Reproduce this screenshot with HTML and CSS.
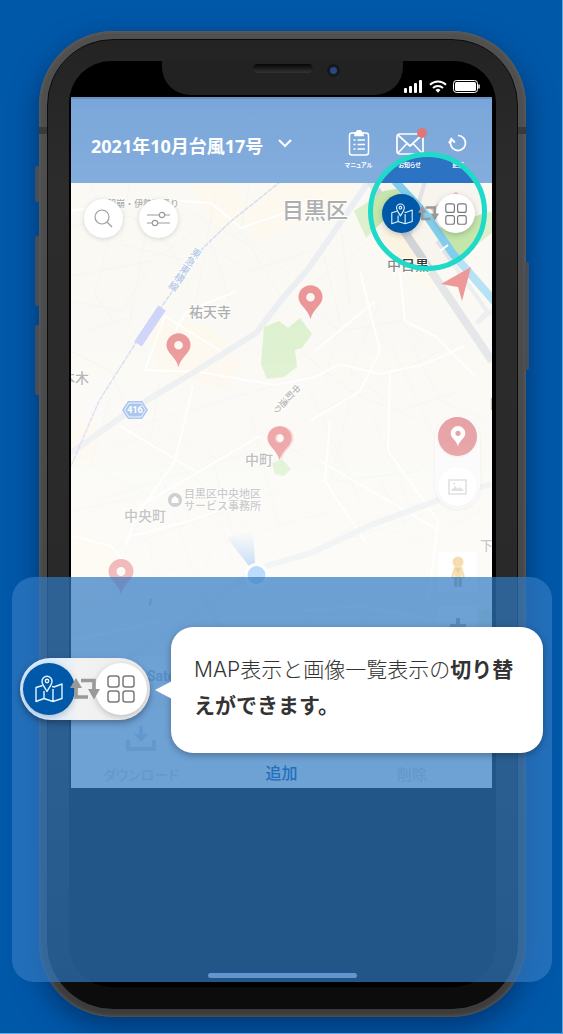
FILE: index.html
```html
<!DOCTYPE html>
<html lang="ja">
<head>
<meta charset="utf-8">
<meta name="viewport" content="width=device-width, initial-scale=1">
<title>MAP表示と画像一覧表示の切り替え</title>
<link rel="stylesheet" href="styles.css">
</head>
<body>
<svg class="defs" aria-hidden="true">
  <symbol id="i-map" viewBox="0 0 28 28">
    <g fill="none" stroke="currentColor" stroke-width="1.4" stroke-linejoin="round">
      <path d="M7.500 10.500 1 12.500v14l8-3 9 3 9-3V9l-8 3-2-.6M9 16v7.500M18 14v12.500"/>
      <path d="M12 16.500C9.500 12 7 9.500 7 6.200a5 5 0 0 1 10 0c0 3.300-2.500 5.800-5 10.300Z"/>
      <circle cx="12" cy="6" r="1.700"/>
    </g>
  </symbol>
  <symbol id="i-grid" viewBox="0 0 28 28">
    <g fill="none" stroke="currentColor" stroke-width="1.500">
      <rect x="1" y="1" width="11" height="11" rx="2.500"/><rect x="16" y="1" width="11" height="11" rx="2.500"/>
      <rect x="1" y="16" width="11" height="11" rx="2.500"/><rect x="16" y="16" width="11" height="11" rx="2.500"/>
    </g>
  </symbol>
  <symbol id="i-swap" viewBox="0 0 30 24">
    <g fill="none" stroke="currentColor" stroke-width="3.600">
      <path d="M6 9v11h12M11 3.500h13V14"/>
    </g>
    <path fill="currentColor" d="M0 11 6 1l6 10ZM18 12h12l-6 10.500Z"/>
  </symbol>
  <symbol id="i-pin" viewBox="0 0 26 36">
    <path fill="currentColor" fill-rule="evenodd" d="M13 0a12.500 12.500 0 0 1 12.500 12.500C25.500 21 15.500 24 13 35.500 10.500 24 .5 21 .5 12.500A12.500 12.500 0 0 1 13 0Zm0 8a4.500 4.500 0 1 0 0 9 4.500 4.500 0 0 0 0-9Z"/>
  </symbol>
</svg>

<main class="stage">
  <div class="phone">
    <span class="key key-mute"></span><span class="key key-up"></span><span class="key key-down"></span><span class="key key-power"></span>
    <span class="seam"></span>
    <div class="bezel">
      <div class="screen">
        <div class="status">
          <div class="notch"><span class="speaker"></span><span class="camera"></span></div>
          <svg width="19" height="13" viewBox="0 0 19 13" fill="#fff"><rect y="8" width="3" height="5" rx="1"/><rect x="5" y="6" width="3" height="7" rx="1"/><rect x="10" y="3" width="3" height="10" rx="1"/><rect x="15" width="3" height="13" rx="1"/></svg>
          <svg width="18" height="13" viewBox="0 0 18 13" fill="none" stroke="#fff" stroke-width="2"><path d="M1 4.800a11.500 11.500 0 0 1 16 0M4 8a7.200 7.200 0 0 1 10 0"/><path d="M6.500 10a3.600 3.600 0 0 1 5 0L9 12.800Z" fill="#fff" stroke="none"/></svg>
          <svg width="27" height="13" viewBox="0 0 27 13"><rect x=".5" y=".5" width="24" height="12" rx="3" fill="none" stroke="#fff"/><rect x="2" y="2" width="21" height="9" rx="1.500" fill="#fff"/><path d="M26 4.500v4" stroke="#fff" stroke-width="1.500"/></svg>
        </div>

        <div class="app">
          <header class="bar">
            <button class="title" type="button">2021年10月台風17号
              <svg width="14" height="9" viewBox="0 0 14 9" fill="none" stroke="#fff" stroke-width="2"><path d="m1 1 6 6 6-6"/></svg>
            </button>
            <nav class="tools">
              <button type="button">
                <svg width="22" height="26" viewBox="0 0 22 26" fill="none" stroke="#fff" stroke-width="1.500"><rect x="1.500" y="3" width="19" height="22" rx="2.500"/><path d="M7 3h1.500a2.500 2.500 0 0 1 5 0H15v2.500H7Z" fill="#fff"/><path d="M9.500 10H17M9.500 14.500H17M9.500 19H17M5.500 10h2M5.500 14.500h2M5.500 19h2"/></svg>
                <span>マニュアル</span>
              </button>
              <button type="button">
                <svg width="28" height="26" viewBox="0 0 28 26" fill="none" stroke="#fff" stroke-width="1.700"><rect x="1" y="4" width="26" height="20" rx="2.500"/><path d="m2 5 12 11L26 5M2 23l9-9.500M26 23l-9-9.500"/></svg>
                <i class="badge"></i>
                <span>お知らせ</span>
              </button>
              <button type="button">
                <svg width="20" height="26" viewBox="0 0 20 26" fill="none" stroke="#fff" stroke-width="1.700"><path d="M10 5.500a7.500 7.500 0 1 1-6.800 4.300"/><path d="m6.800 12.500-3.400-3.500-2.400 4.200" stroke-width="2"/></svg>
                <span>更新</span>
              </button>
            </nav>
          </header>

          <section class="map" aria-label="地図">
            <svg class="canvas" viewBox="71 182 421 525" preserveAspectRatio="xMidYMin slice">
              <path class="area" d="M270 180h90l-30 29-70 30-20-18ZM148 315l60 10 35 35-15 30-70-20ZM190 180l30 58 30-30-20-25ZM380 235l50 60 10-20-40-60ZM71 530l40 10v60H71ZM71 430l25-15v45H71Z"/>
              <path class="lane" d="M71 225l60-10 40 30 20 45M90 180l20 53-15 60 20 30M71 275l80-15 60-40M130 180l-10 63 80 20M71 300l50 10 30-45M85 330l40-12 20 25M71 460l90-30 60 30 80-10M110 395l-20 70 60 30-30 70M160 380l-10 60 60 50 30 90M71 510l100-20 90 40 70-20M300 300l40 30 60-10 40 40M320 240l20 80-15 60M380 300l-30 70 50 40 60-20M350 400l-20 80 30 60M300 560l60-40 60 20 60-30M380 480l40 70M250 180l-10 53 50 40M200 240l50 30 60-20M230 300l-20-60M410 340l30 60 50 20M280 440l60 40 80-10M100 580l90-15 50 40 70 10M71 620l110-10 70 35M150 540l10 100M300 600l30 100M360 580l20 110M280 650l100-20 110 10M440 570l-30 100M180 500l30 50-20 70M71 350l40 20 20 50M190 210l60 35 30 50M340 215l10 90M300 350l50 40 70 30M230 400l70 70M150 210l-20 110M215 195l-20 110"/>
              <path class="lane" d="M120 430l170-50M95 500l160-50M110 550l170-60M250 570l200-65M290 300l80-60M320 410l140-70M360 500l-50-110M420 530l-50-120M450 470l-60-130M200 590l-40-120M240 560l-30-110M280 530l-30-120"/>
              <path class="street" d="M71 210l80-12 60 4 30 25 80-28M165 315l-20 54 55 2 75 13 40-8 25-13 40 10 45-10 40-18M165 315l60 38M193 385l-18 75-35 50M120 425l75 45M260 435l-120 70-15 40 5-10 60-15 70-25M175 330l12-20 50-20M400 270l5 50 30 15 40 40M360 270l20 80-20 40-50 30M330 420l-5 60 40 60M71 535l40 10 20 25M320 460l120 70M375 300l-60 50M390 370l-2 80 50 70-10 80M71 640l90-20M300 610l60-5 80 15"/>
              <path class="road" d="m71 452 60-43 65-39 60-38 27-35 26-30 60-87"/>
              <path class="road" d="m71 695 140-93 45-34 55-16 60-28 70-26 50-15M203 590l16 33 16 17"/>
              <path class="road narrow" d="m425 180-15 53M437 240l50 70-10 12 15-12"/>
              <path class="road wide" d="m366 174 126 186"/>
              <path class="park" d="m264 326 15-6 9 7 12-10 12 16-10 14-7 2 2 17-13 10-17 2-6-15ZM272 462l10-4 9 10-7 7-9-2ZM354 210l30-20 18-3 8 20-24 10-20 20ZM435 228l57-18v22l-31 24ZM478 612l8-4 6 2v22h-14Z"/>
              <path class="plaza" d="m432 208 24-16 14 12-8 24-20-6Z"/>
              <path class="river" d="m395 180 32 35 26 38 42 48"/>
              <path class="bridge" d="m440 250 8-6"/>
              <path class="rail" d="m71 465 28-65 38-60 30-42 35-50 28-27 50-40"/>
              <path class="station" d="m138 343 24-36"/>
              <g class="label">
                <text x="107" y="206" font-size="9">朋崩・伊勢脇通り</text>
                <text x="282" y="217" font-size="22">目黒区</text>
                <text x="189" y="316" font-size="14">祐天寺</text>
                <text x="61" y="382" font-size="14">本木</text>
                <text x="245" y="464" font-size="14">中町</text>
                <text x="124" y="520" font-size="14">中央町</text>
                <text class="dark" x="387" y="269" font-size="14">中目黒</text>
                <text x="480" y="549" font-size="13">下</text>
                <text x="489" y="407" font-size="13">目</text>
                <text class="soft" x="184" y="497" font-size="11">目黒区中央地区</text>
                <text class="soft" x="184" y="509" font-size="11">サービス事務所</text>
                <text class="line" transform="translate(199 248) rotate(34)" font-size="10">東急東横線</text>
                <text class="down" transform="translate(299 385) rotate(43)" font-size="9">中町通り</text>
              </g>
              <circle cx="175" cy="499" r="7" fill="#8e9194"/><path d="M171.500 502v-4l3.500-3 3.500 3v4Z" fill="#fff"/>
              <path d="m122 409 6-9h14l6 9-6 9h-14Z" fill="#5a8fdc"/><path d="m124.500 409 4.500-7h12l4.500 7-4.500 7h-12Z" fill="none" stroke="#dfeaff"/>
              <text x="135" y="412" class="route">416</text>
              <path d="m441 283 30-17-9 34-4-14Z" fill="#e05050"/>
              <path d="m256 574-29-37q12-5 26-7Z" fill="url(#beam)"/>
              <linearGradient id="beam" x1="0" y1="0" x2="0" y2="1"><stop offset="0" stop-color="#6fb0f0" stop-opacity="0"/><stop offset="1" stop-color="#3c8ee8"/></linearGradient>
              <circle cx="256.500" cy="574" r="12" fill="#fff"/><circle cx="256.500" cy="574" r="9" fill="#4da2f5"/>
              <path d="m151 598-1 6" stroke="#2f87c8" stroke-width="2"/>
              <g color="#dd4a4c">
                <use href="#i-pin" x="298" y="284" width="25" height="35"/>
                <use href="#i-pin" x="166" y="332" width="25" height="35"/>
                <use href="#i-pin" x="269" y="425" width="25" height="35" opacity=".4"/>
                <use href="#i-pin" x="267" y="425" width="25" height="35"/>
                <use href="#i-pin" x="108" y="558" width="26" height="36"/>
              </g>
            </svg>
            <div class="map-top">
              <button class="round" type="button" aria-label="検索"><svg width="19" height="19" viewBox="0 0 19 19" fill="none" stroke="#555" stroke-width="1.200"><circle cx="8" cy="8" r="7"/><path d="m13 13 5 5"/></svg></button>
              <button class="round" type="button" aria-label="絞り込み"><svg width="23" height="16" viewBox="0 0 23 16" fill="none" stroke="#555" stroke-width="1.200"><path d="M0 4h12M18 4h5M0 12h5M11 12h12"/><circle cx="15" cy="4" r="2.700"/><circle cx="8" cy="12" r="2.700"/></svg></button>
              <div class="switch">
                <button class="on" type="button" aria-label="MAP表示"><svg><use href="#i-map"/></svg></button>
                <svg class="swap"><use href="#i-swap"/></svg>
                <button type="button" aria-label="画像一覧表示"><svg><use href="#i-grid"/></svg></button>
              </div>
            </div>
            <div class="side">
              <div class="stack">
                <button class="round red" type="button" aria-label="ピン"><svg width="16" height="21"><use href="#i-pin"/></svg></button>
                <button class="round" type="button" aria-label="画像"><svg width="19" height="16" viewBox="0 0 19 16" fill="none" stroke="#bbb" stroke-width="1.600"><path d="M1 1h17v14H1Z"/><path d="m3 12 4-5 3 3 2-2 4 4Z" fill="#bbb" stroke="none"/><circle cx="6" cy="4.500" r="1" fill="#bbb" stroke="none"/></svg></button>
              </div>
              <button class="square" type="button" aria-label="ストリートビュー"><svg width="18" height="32" viewBox="0 0 18 32"><path d="M5 11h8l3 10-2 2-2-5v3H6v-3l-2 5-2-2Z" fill="#e8a830"/><circle cx="9" cy="6" r="5.500" fill="#e8a830"/><path d="m6 12 3 5 3-5Z" fill="#cf7d1c"/><path d="M5 21h3.500v10H5ZM9.500 21H13v10H9.500Z" fill="#56732a"/></svg></button>
              <button class="square" type="button" aria-label="拡大"><svg width="16" height="16" stroke="#111" stroke-width="4"><path d="M8 0v16M0 8h16"/></svg></button>
            </div>
            <div class="types"><span></span><span>Satellite</span></div>
          </section>

          <nav class="tabs">
            <button type="button"><svg width="30" height="25" viewBox="0 0 30 25" fill="none" stroke="currentColor" stroke-width="4"><path d="M2 14v9h26v-9M15 0v10"/><path d="M8 8h14l-7 8Z" fill="currentColor" stroke="none"/></svg>ダウンロード</button>
            <button class="active" type="button"><svg width="26" height="25" viewBox="0 0 26 25" fill="none" stroke="currentColor" stroke-width="3"><path d="M13 2v17M4 11h18M3 23h20"/></svg>追加</button>
            <button type="button"><svg width="24" height="25" viewBox="0 0 24 25" fill="none" stroke="currentColor" stroke-width="3"><path d="M2 6h20M5 6v17h14V6M9 2h6"/></svg>削除</button>
          </nav>
          <div class="veil"></div>
          <div class="ring"></div>
        </div>
        <span class="home"></span>
      </div>
    </div>
  </div>

  <section class="guide">
    <div class="switch large">
      <button class="on" type="button" aria-label="MAP表示"><svg><use href="#i-map"/></svg></button>
      <svg class="swap"><use href="#i-swap"/></svg>
      <button type="button" aria-label="画像一覧表示"><svg><use href="#i-grid"/></svg></button>
    </div>
    <p class="bubble">MAP表示と画像一覧表示の<strong>切り替えができます。</strong></p>
  </section>
</main>
</body>
</html>
```

FILE: styles.css
```css
* { box-sizing: border-box; }
body {
  margin: 0;
  background: #5fa8e0;
  font-family: "Noto Sans CJK JP", "Noto Sans", sans-serif;
}
button {
  display: flex;
  align-items: center;
  justify-content: center;
  margin: 0;
  padding: 0;
  border: 0;
  background: none;
  font: inherit;
  color: inherit;
}
.defs { position: absolute; width: 0; height: 0; }

.stage {
  position: relative;
  margin: 0 1px 1px 0;
  padding: 31px 36px 16px 39px;
  background: #0058a9;
  overflow: hidden;
}

/* phone body */
.phone {
  position: relative;
  padding: 8px;
  border-radius: 74px;
  background: linear-gradient(#505050, #484848 50%, #3c3c3c);
  box-shadow: 0 10px 28px rgba(0, 20, 60, .5), inset 0 0 4px #666;
}
.bezel {
  position: relative;
  padding: 21px;
  border: 1px solid #0c0c0c;
  border-radius: 66px;
  background: linear-gradient(#232323, #2c2c2c 15%, #292929 60%, #0c0c0c 98%);
}
.screen {
  position: relative;
  min-height: 926px;
  padding: 0 4px 0 2px;
  border-radius: 42px;
  background: #000;
}
.key {
  position: absolute;
  left: -4px;
  width: 4px;
  height: 70px;
  border-radius: 2px 0 0 2px;
  background: #474d56;
}
.key-mute { top: 135px; height: 36px; }
.key-up { top: 205px; }
.key-down { top: 294px; }
.key-power { left: auto; right: -3px; top: 231px; height: 108px; border-radius: 0 2px 2px 0; }
.seam {
  position: absolute;
  top: 96px;
  left: 0;
  right: 0;
  height: 7px;
  background: #3a3a3a;
}

.status {
  position: relative;
  display: flex;
  justify-content: flex-end;
  align-items: flex-end;
  gap: 6px;
  height: 36px;
  padding: 0 12px 4px 0;
}
.notch {
  position: absolute;
  top: -1px;
  left: 50%;
  width: 241px;
  height: 35px;
  margin-left: -120px;
  border-radius: 0 0 28px 28px;
  background: #222;
}
.speaker, .camera { position: absolute; top: 4px; }
.speaker {
  left: 91px;
  width: 60px;
  height: 9px;
  border-radius: 5px;
  background: linear-gradient(#060606, #333);
}
.camera {
  left: 165px;
  width: 13px;
  height: 13px;
  border: 3px solid #15181c;
  border-radius: 50%;
  background: #29497c;
}

/* application */
.app { position: relative; background: #fff; }
.bar {
  display: flex;
  align-items: flex-start;
  justify-content: space-between;
  height: 86px;
  padding: 31px 11px 0 20px;
  border-top: 2px solid #17519d;
  background: #2c73c4;
  color: #fff;
}
.title {
  gap: 15px;
  padding-top: 2px;
  font-family: "Open Sans", "Noto Sans CJK JP", sans-serif;
  font-size: 18px;
  font-weight: 700;
  line-height: 28px;
}
.title svg { margin-bottom: 6px; }
.tools { display: flex; }
.tools button {
  position: relative;
  flex-direction: column;
  width: 51px;
  gap: 4px;
  font-size: 6px;
  font-weight: 700;
  line-height: 9px;
}
.tools button:last-child { width: 46px; }
.tools span { font-feature-settings: "palt"; white-space: nowrap; }
.badge {
  position: absolute;
  top: -2px;
  left: 33px;
  width: 10px;
  height: 10px;
  border-radius: 50%;
  background: #cc1f1f;
}

.map { position: relative; height: 525px; background: #f7f5ed; overflow: hidden; }
.canvas { position: absolute; width: 100%; height: 100%; }
.area { fill: #fdf4de; opacity: .7; }
.lane, .street, .road, .river, .rail, .station, .bridge { fill: none; }
.lane { stroke: #edeeec; stroke-width: 1; }
.street { stroke: #fff; stroke-width: 2; }
.road { stroke: #dfe3e7; stroke-width: 6; }
.road.narrow { stroke-width: 4; }
.road.wide { stroke: #d0d4d8; stroke-width: 8; }
.park { fill: #c4e6ab; }
.plaza { fill: #f4e6e6; stroke: #e3c4c8; stroke-width: 2; }
.river { stroke: #82cdec; stroke-width: 8; }
.bridge { stroke: #fff; stroke-width: 2; }
.rail { stroke: #b3c7ea; stroke-width: 1.5; stroke-dasharray: 5 1; }
.station { stroke: #abb5f4; stroke-width: 9; }
.label { fill: #71757a; font-weight: 500; stroke: #fffdf5; stroke-width: 2px; paint-order: stroke; }
.label .dark { fill: #34373a; }
.label .soft { fill: #85888c; }
.label .line, .label .down { writing-mode: vertical-rl; }
.label .line { fill: #7fa3d8; }
.route { fill: #fff; font: 700 9px Roboto, sans-serif; text-anchor: middle; }

.map-top { position: relative; display: flex; gap: 16px; padding: 11px 13px; }
.round {
  width: 39px;
  height: 39px;
  margin-top: 5px;
  border-radius: 50%;
  background: #fff;
  box-shadow: 0 1px 5px rgba(0, 0, 0, .25);
}

.switch { display: flex; align-items: center; margin-left: auto; }
.switch button {
  width: 39px;
  height: 39px;
  border-radius: 50%;
  background: #fff;
  color: #77797c;
  box-shadow: 0 2px 6px rgba(0, 0, 0, .2);
}
.switch button.on { background: #0058a8; color: #e2f4ff; }
.switch button svg { width: 22px; height: 22px; }
.switch .swap { position: relative; width: 21px; height: 17px; margin: 0 -3px; color: #999; }
.map-top .switch { margin: 0 4px 5px auto; }

.side {
  position: absolute;
  top: 232px;
  right: 12px;
  display: flex;
  flex-direction: column;
  align-items: center;
}
.stack {
  display: flex;
  flex-direction: column;
  gap: 6px;
  padding: 0 3px 3px;
  margin-bottom: 43px;
  border-radius: 24px;
  background: #f7f7f7;
  box-shadow: 0 1px 3px rgba(0, 0, 0, .12);
}
.round.red { margin-top: 2px; background: #cf4348; color: #fff; }
.stack .round { box-shadow: 0 1px 3px rgba(0, 0, 0, .1); }
.square { width: 39px; height: 40px; margin-bottom: 14px; background: #fff; }
.types {
  position: absolute;
  bottom: 0;
  left: 10px;
  display: flex;
  padding-bottom: 13px;
  font: 700 14px/38px Roboto, sans-serif;
  color: #24405f;
}
.types span { width: 57px; padding-left: 9px; background: rgba(255, 255, 255, .6); border-right: 1px solid #ddd; }
.types span + span { width: 90px; }

.tabs {
  display: grid;
  grid-template-columns: repeat(3, 1fr);
  height: 80px;
  padding-top: 18px;
  background: #fff;
  color: #8d98a6;
  font-size: 14px;
  line-height: 22px;
}
.tabs button {
  flex-direction: column;
  justify-content: flex-start;
  gap: 12px;
  font-weight: 500;
  font-feature-settings: "palt";
}
.tabs .active { position: relative; z-index: 1; gap: 10px; color: #0058a8; font-size: 16px; }
.tabs button:last-child { padding-right: 20px; font-size: 15px; }

.veil {
  position: absolute;
  inset: 0;
  background: linear-gradient(rgba(255, 255, 255, .37), rgba(255, 255, 255, .42) 13%, rgba(255, 255, 255, .42) 30%, rgba(255, 255, 255, .66) 75%, rgba(255, 255, 255, .7));
  -webkit-mask: radial-gradient(circle at calc(100% - 64px) 115px, transparent 56px, #000 57px);
  mask: radial-gradient(circle at calc(100% - 64px) 115px, transparent 56px, #000 57px);
  pointer-events: none;
}
.ring {
  position: absolute;
  top: 55px;
  right: 5px;
  width: 119px;
  height: 119px;
  border: 5px solid #1fdac8;
  border-radius: 50%;
  pointer-events: none;
}
.home {
  position: absolute;
  bottom: 9px;
  left: 50%;
  width: 149px;
  height: 5px;
  margin-left: -75px;
  border-radius: 3px;
  background: #d0dcec;
}

/* explanation laid over the lower part of the phone */
.guide {
  position: absolute;
  z-index: 2;
  left: 12px;
  right: 10px;
  bottom: 51px;
  display: flex;
  align-items: flex-start;
  gap: 21px;
  min-height: 405px;
  padding: 50px 9px 0 8px;
  border-radius: 22px;
  background: rgba(49, 121, 194, .7);
}
.switch.large {
  flex: none;
  width: 130px;
  margin: 31px 0 0;
  padding: 5px 3px;
  justify-content: space-between;
  border-radius: 31px;
  background: linear-gradient(90deg, #d8ebff 25%, #f2f2f2 45%, #ececec);
  box-shadow: 0 3px 6px rgba(0, 0, 0, .3);
}
.large button { width: 52px; height: 52px; }
.large button svg, .large button.on svg { width: 28px; height: 28px; }
.large .swap { width: 30px; height: 24px; margin: 0 -7px; }
.bubble {
  position: relative;
  flex: 1;
  min-height: 126px;
  margin: 0;
  padding: 25px 23px;
  border-radius: 22px;
  background: #fff;
  color: #333;
  font-family: Inter, "Noto Sans CJK JP", sans-serif;
  font-size: 21px;
  font-weight: 300;
  line-height: 36px;
  word-break: break-all;
  box-shadow: 0 2px 7px rgba(0, 0, 0, .3);
}
.bubble::before {
  content: "";
  position: absolute;
  top: 54px;
  left: -16px;
  border: solid transparent;
  border-width: 9px 17px 9px 0;
  border-right-color: #fff;
}
.bubble strong { font-weight: 700; }
```
